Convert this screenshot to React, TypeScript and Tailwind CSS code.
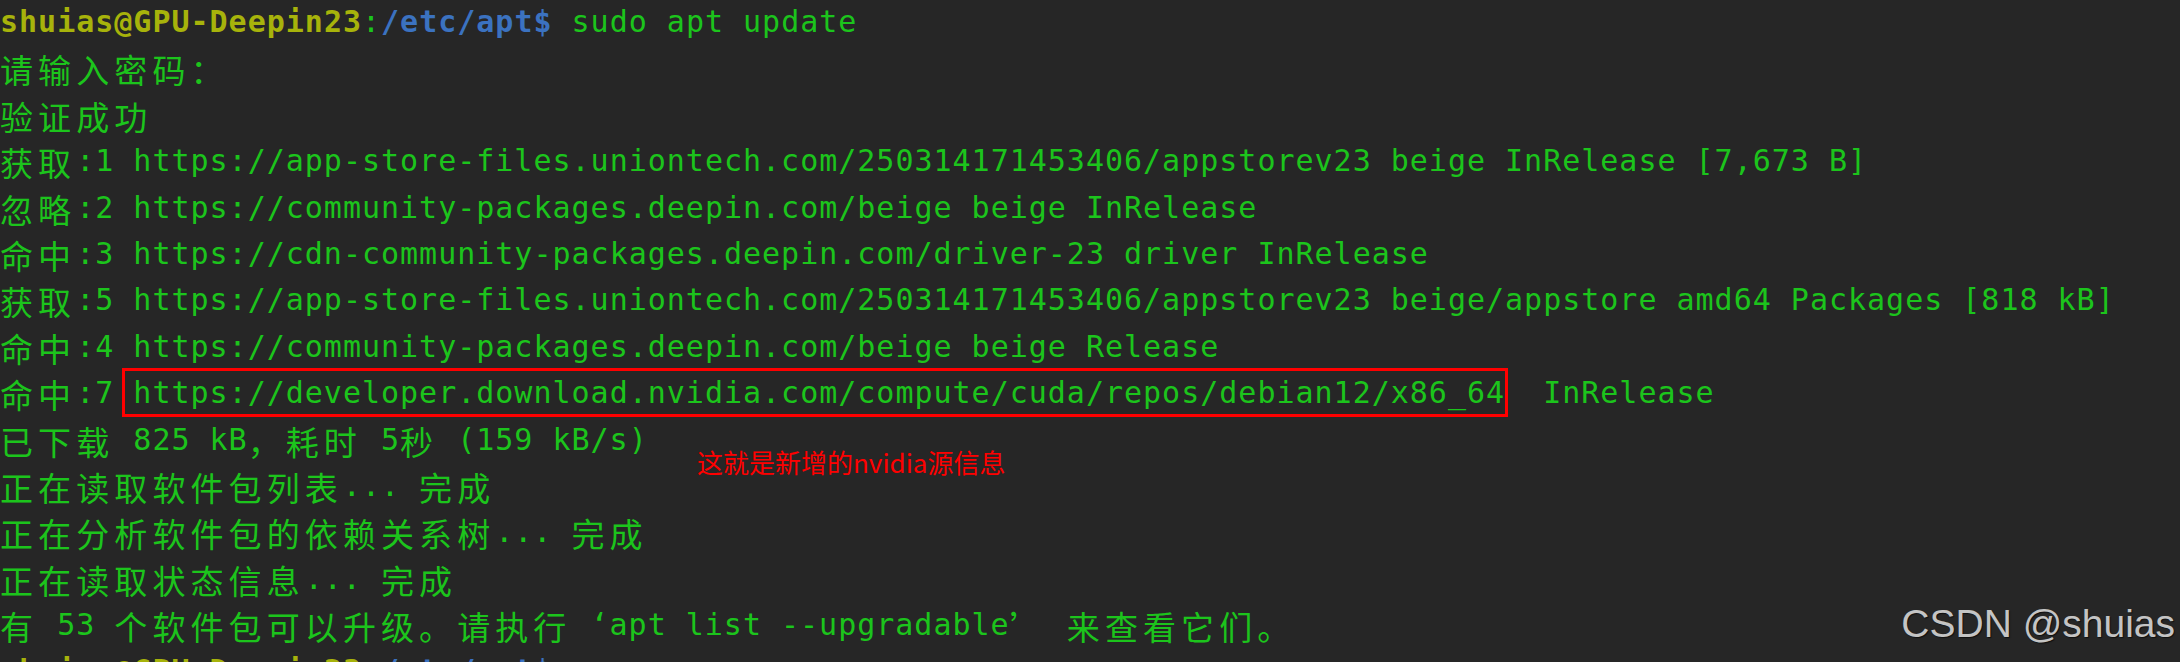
import React from "react";

type Seg = { t: string; c?: string; b?: boolean };

const G = "text-[#1cc41c]";
const OLIVE = "text-[#a7b30b]";
const BLUE = "text-[#3b72c0]";

const lines: Seg[][] = [
  [
    { t: "shuias@GPU-Deepin23", c: OLIVE, b: true },
    { t: ":", c: G },
    { t: "/etc/apt$", c: BLUE, b: true },
    { t: " sudo apt update", c: G },
  ],
  [{ t: "请输入密码：", c: G }],
  [{ t: "验证成功", c: G }],
  [{ t: "获取:1 https://app-store-files.uniontech.com/250314171453406/appstorev23 beige InRelease [7,673 B]", c: G }],
  [{ t: "忽略:2 https://community-packages.deepin.com/beige beige InRelease", c: G }],
  [{ t: "命中:3 https://cdn-community-packages.deepin.com/driver-23 driver InRelease", c: G }],
  [{ t: "获取:5 https://app-store-files.uniontech.com/250314171453406/appstorev23 beige/appstore amd64 Packages [818 kB]", c: G }],
  [{ t: "命中:4 https://community-packages.deepin.com/beige beige Release", c: G }],
  [{ t: "命中:7 https://developer.download.nvidia.com/compute/cuda/repos/debian12/x86_64  InRelease", c: G }],
  [{ t: "已下载 825 kB，耗时 5秒 (159 kB/s)", c: G }],
  [{ t: "正在读取软件包列表... 完成", c: G }],
  [{ t: "正在分析软件包的依赖关系树... 完成", c: G }],
  [{ t: "正在读取状态信息... 完成", c: G }],
  [{ t: "有 53 个软件包可以升级。请执行 ‘apt list --upgradable’ 来查看它们。", c: G }],
  [
    { t: "shuias@GPU-Deepin23", c: OLIVE, b: true },
    { t: ":", c: G },
    { t: "/etc/apt$", c: BLUE, b: true },
  ],
];

// wide (double-cell) characters; the opening quote is drawn in a single cell
function isWide(ch: string) {
  const cp = ch.codePointAt(0) ?? 0;
  return cp >= 0x2e80 || cp === 0x2019 || cp === 0x201d;
}

function renderSeg(seg: Seg, key: number) {
  const out: React.ReactNode[] = [];
  let buf = "";
  let k = 0;
  const flush = () => {
    if (buf) {
      out.push(<span key={k++}>{buf}</span>);
      buf = "";
    }
  };
  for (const ch of Array.from(seg.t)) {
    if (isWide(ch)) {
      flush();
      out.push(
        <span
          key={k++}
          className="inline-block w-[38.1px] text-left text-[33px] leading-none tracking-normal align-[-5px] font-normal font-['Noto_Sans_CJK_SC',sans-serif]"
        >
          {ch}
        </span>
      );
    } else {
      buf += ch;
    }
  }
  flush();
  return (
    <span key={key} className={`${seg.c ?? ""} ${seg.b ? "font-bold" : "font-normal"}`}>
      {out}
    </span>
  );
}

export default function App() {
  return (
    <div className="relative w-[2180px] h-[662px] overflow-hidden bg-[#262626]">
      <div className="flex flex-col font-['DejaVu_Sans_Mono',monospace] text-[30px] tracking-[0.99px] leading-[43.2px] whitespace-pre">
        {lines.map((segs, i) => (
          <div key={i} className="h-[46.4px] shrink-0">
            {segs.map((s, j) => renderSeg(s, j))}
          </div>
        ))}
      </div>

      {/* red annotation box */}
      <div className="absolute left-[122px] top-[368px] w-[1386px] h-[49px] border-[3px] border-[#ff0000]" />

      {/* red annotation note */}
      <div className="absolute left-[697px] top-[449px] text-[26px] leading-none text-[#ff0000] font-['Noto_Sans_CJK_SC',sans-serif] whitespace-nowrap">
        这就是新增的nvidia源信息
      </div>

      {/* watermark */}
      <div className="absolute right-[5px] top-[604px] text-[39px] leading-none text-[#c4c4c4] font-['Liberation_Sans',Arial,sans-serif] whitespace-nowrap [text-shadow:1px_1px_1px_rgba(0,0,0,0.6)]">
        CSDN @shuias
      </div>
    </div>
  );
}
